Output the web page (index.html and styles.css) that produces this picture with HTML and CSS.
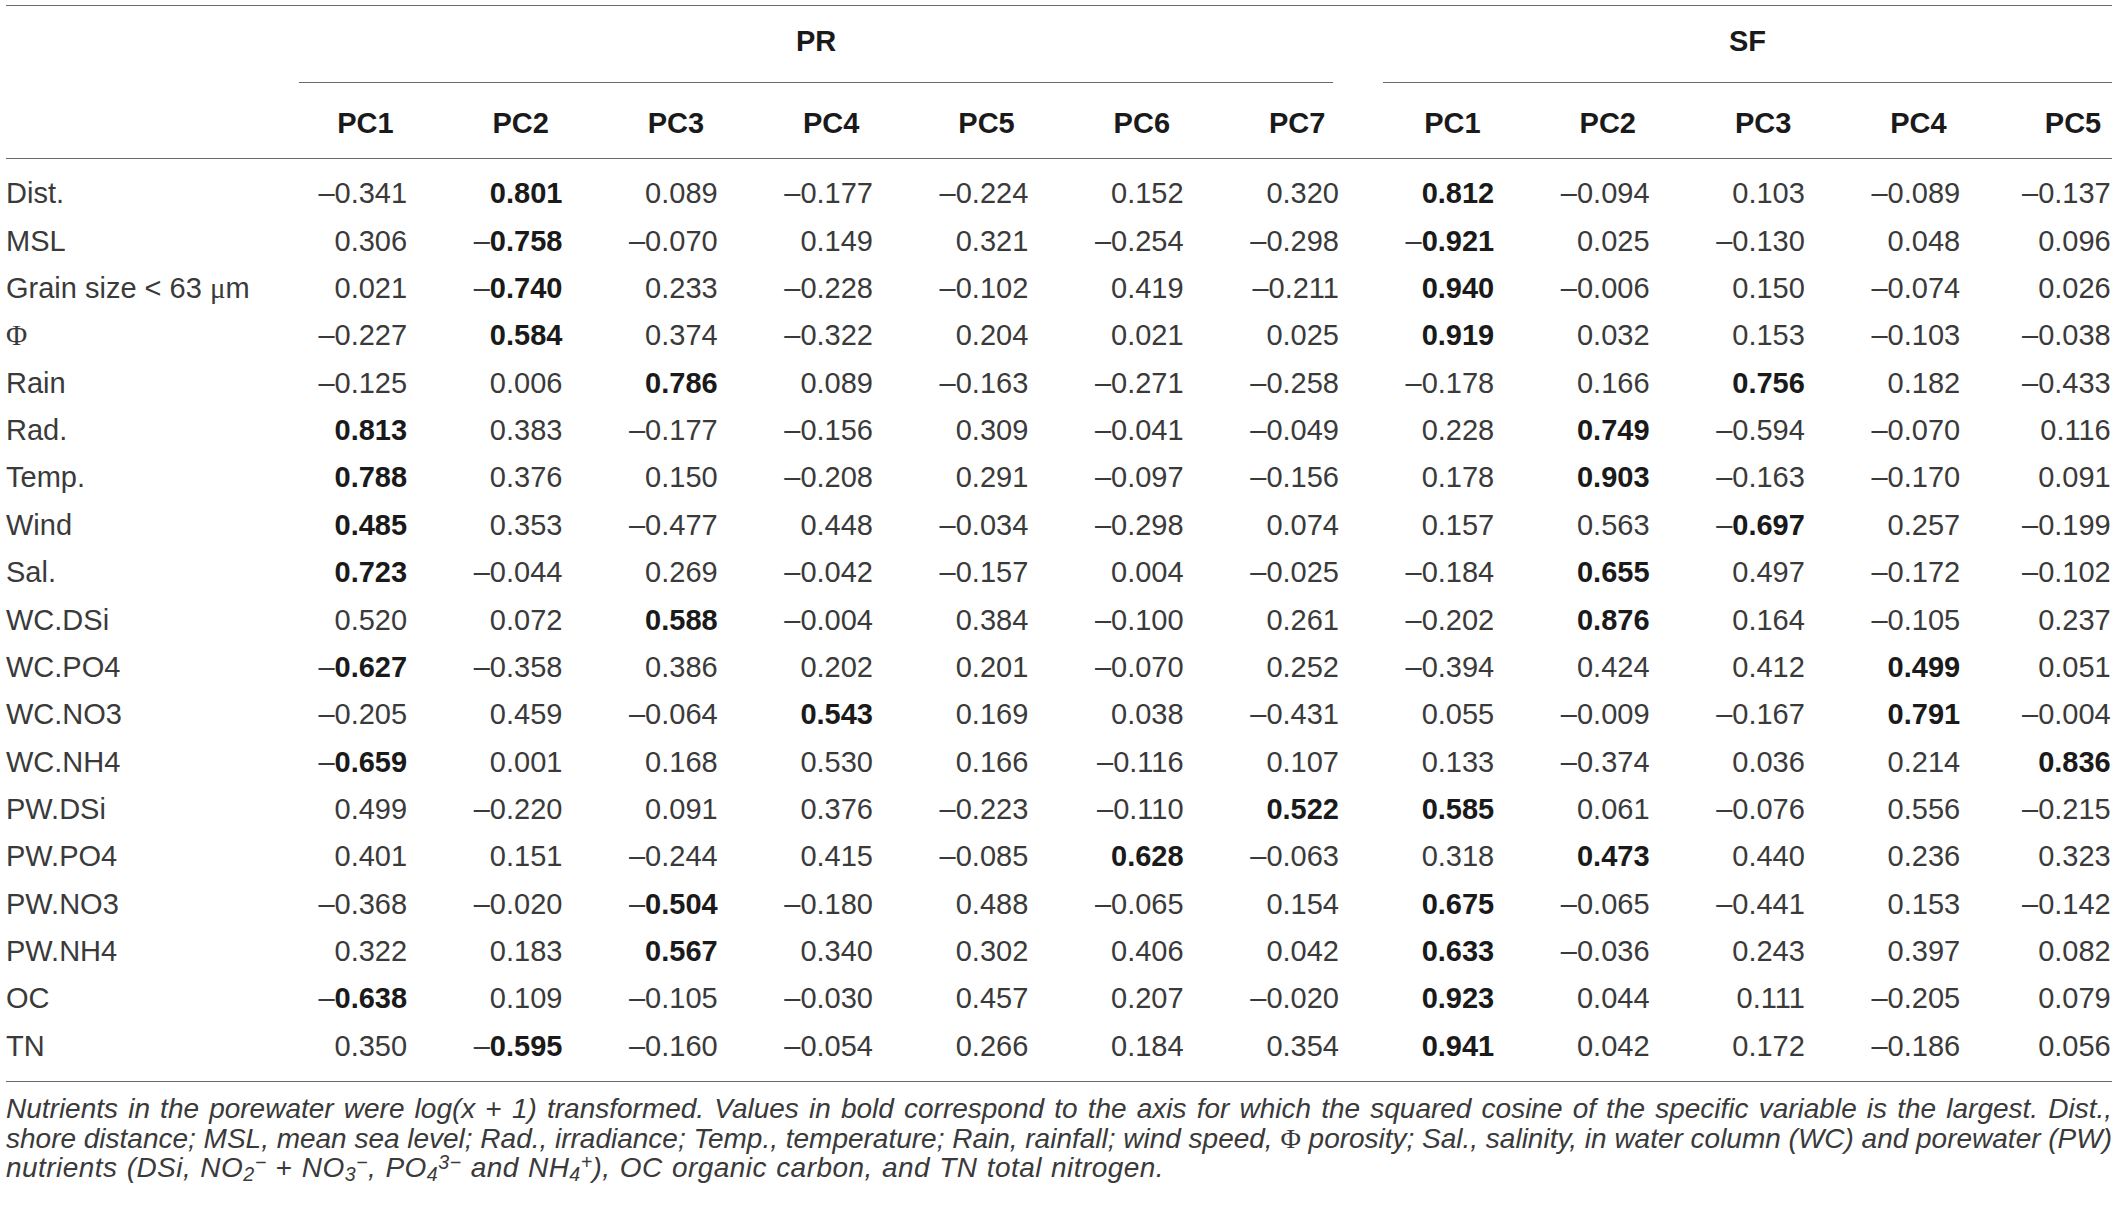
FILE: index.html
```html
<!DOCTYPE html>
<html lang="en">
<head>
<meta charset="utf-8">
<title>PCA loadings</title>
<link rel="stylesheet" href="styles.css">
</head>
<body>
<div class="page">
<table class="pca">
<colgroup>
<col class="c-label">
<col class="c-num"><col class="c-num"><col class="c-num"><col class="c-num"><col class="c-num"><col class="c-num"><col class="c-num">
<col class="c-num"><col class="c-num"><col class="c-num"><col class="c-num"><col class="c-last">
</colgroup>
<thead>
<tr class="grp">
<th></th>
<th colspan="7"><div class="grp-line pr">PR</div></th>
<th colspan="5"><div class="grp-line sf">SF</div></th>
</tr>
<tr class="pcs">
<th></th>
<th class="num">PC1</th><th class="num">PC2</th><th class="num">PC3</th><th class="num">PC4</th><th class="num">PC5</th><th class="num">PC6</th><th class="num">PC7</th>
<th class="num">PC1</th><th class="num">PC2</th><th class="num">PC3</th><th class="num">PC4</th><th class="num last">PC5</th>
</tr>
</thead>
<tbody>
<tr><td class="lab">Dist.</td><td class="num">–0.341</td><td class="num"><b>0.801</b></td><td class="num">0.089</td><td class="num">–0.177</td><td class="num">–0.224</td><td class="num">0.152</td><td class="num">0.320</td><td class="num"><b>0.812</b></td><td class="num">–0.094</td><td class="num">0.103</td><td class="num">–0.089</td><td class="num">–0.137</td></tr>
<tr><td class="lab">MSL</td><td class="num">0.306</td><td class="num">–<b>0.758</b></td><td class="num">–0.070</td><td class="num">0.149</td><td class="num">0.321</td><td class="num">–0.254</td><td class="num">–0.298</td><td class="num">–<b>0.921</b></td><td class="num">0.025</td><td class="num">–0.130</td><td class="num">0.048</td><td class="num">0.096</td></tr>
<tr><td class="lab">Grain size &lt; 63 <span class="greek">μ</span>m</td><td class="num">0.021</td><td class="num">–<b>0.740</b></td><td class="num">0.233</td><td class="num">–0.228</td><td class="num">–0.102</td><td class="num">0.419</td><td class="num">–0.211</td><td class="num"><b>0.940</b></td><td class="num">–0.006</td><td class="num">0.150</td><td class="num">–0.074</td><td class="num">0.026</td></tr>
<tr><td class="lab"><span class="greek">Φ</span></td><td class="num">–0.227</td><td class="num"><b>0.584</b></td><td class="num">0.374</td><td class="num">–0.322</td><td class="num">0.204</td><td class="num">0.021</td><td class="num">0.025</td><td class="num"><b>0.919</b></td><td class="num">0.032</td><td class="num">0.153</td><td class="num">–0.103</td><td class="num">–0.038</td></tr>
<tr><td class="lab">Rain</td><td class="num">–0.125</td><td class="num">0.006</td><td class="num"><b>0.786</b></td><td class="num">0.089</td><td class="num">–0.163</td><td class="num">–0.271</td><td class="num">–0.258</td><td class="num">–0.178</td><td class="num">0.166</td><td class="num"><b>0.756</b></td><td class="num">0.182</td><td class="num">–0.433</td></tr>
<tr><td class="lab">Rad.</td><td class="num"><b>0.813</b></td><td class="num">0.383</td><td class="num">–0.177</td><td class="num">–0.156</td><td class="num">0.309</td><td class="num">–0.041</td><td class="num">–0.049</td><td class="num">0.228</td><td class="num"><b>0.749</b></td><td class="num">–0.594</td><td class="num">–0.070</td><td class="num">0.116</td></tr>
<tr><td class="lab">Temp.</td><td class="num"><b>0.788</b></td><td class="num">0.376</td><td class="num">0.150</td><td class="num">–0.208</td><td class="num">0.291</td><td class="num">–0.097</td><td class="num">–0.156</td><td class="num">0.178</td><td class="num"><b>0.903</b></td><td class="num">–0.163</td><td class="num">–0.170</td><td class="num">0.091</td></tr>
<tr><td class="lab">Wind</td><td class="num"><b>0.485</b></td><td class="num">0.353</td><td class="num">–0.477</td><td class="num">0.448</td><td class="num">–0.034</td><td class="num">–0.298</td><td class="num">0.074</td><td class="num">0.157</td><td class="num">0.563</td><td class="num">–<b>0.697</b></td><td class="num">0.257</td><td class="num">–0.199</td></tr>
<tr><td class="lab">Sal.</td><td class="num"><b>0.723</b></td><td class="num">–0.044</td><td class="num">0.269</td><td class="num">–0.042</td><td class="num">–0.157</td><td class="num">0.004</td><td class="num">–0.025</td><td class="num">–0.184</td><td class="num"><b>0.655</b></td><td class="num">0.497</td><td class="num">–0.172</td><td class="num">–0.102</td></tr>
<tr><td class="lab">WC.DSi</td><td class="num">0.520</td><td class="num">0.072</td><td class="num"><b>0.588</b></td><td class="num">–0.004</td><td class="num">0.384</td><td class="num">–0.100</td><td class="num">0.261</td><td class="num">–0.202</td><td class="num"><b>0.876</b></td><td class="num">0.164</td><td class="num">–0.105</td><td class="num">0.237</td></tr>
<tr><td class="lab">WC.PO4</td><td class="num">–<b>0.627</b></td><td class="num">–0.358</td><td class="num">0.386</td><td class="num">0.202</td><td class="num">0.201</td><td class="num">–0.070</td><td class="num">0.252</td><td class="num">–0.394</td><td class="num">0.424</td><td class="num">0.412</td><td class="num"><b>0.499</b></td><td class="num">0.051</td></tr>
<tr><td class="lab">WC.NO3</td><td class="num">–0.205</td><td class="num">0.459</td><td class="num">–0.064</td><td class="num"><b>0.543</b></td><td class="num">0.169</td><td class="num">0.038</td><td class="num">–0.431</td><td class="num">0.055</td><td class="num">–0.009</td><td class="num">–0.167</td><td class="num"><b>0.791</b></td><td class="num">–0.004</td></tr>
<tr><td class="lab">WC.NH4</td><td class="num">–<b>0.659</b></td><td class="num">0.001</td><td class="num">0.168</td><td class="num">0.530</td><td class="num">0.166</td><td class="num">–0.116</td><td class="num">0.107</td><td class="num">0.133</td><td class="num">–0.374</td><td class="num">0.036</td><td class="num">0.214</td><td class="num"><b>0.836</b></td></tr>
<tr><td class="lab">PW.DSi</td><td class="num">0.499</td><td class="num">–0.220</td><td class="num">0.091</td><td class="num">0.376</td><td class="num">–0.223</td><td class="num">–0.110</td><td class="num"><b>0.522</b></td><td class="num"><b>0.585</b></td><td class="num">0.061</td><td class="num">–0.076</td><td class="num">0.556</td><td class="num">–0.215</td></tr>
<tr><td class="lab">PW.PO4</td><td class="num">0.401</td><td class="num">0.151</td><td class="num">–0.244</td><td class="num">0.415</td><td class="num">–0.085</td><td class="num"><b>0.628</b></td><td class="num">–0.063</td><td class="num">0.318</td><td class="num"><b>0.473</b></td><td class="num">0.440</td><td class="num">0.236</td><td class="num">0.323</td></tr>
<tr><td class="lab">PW.NO3</td><td class="num">–0.368</td><td class="num">–0.020</td><td class="num">–<b>0.504</b></td><td class="num">–0.180</td><td class="num">0.488</td><td class="num">–0.065</td><td class="num">0.154</td><td class="num"><b>0.675</b></td><td class="num">–0.065</td><td class="num">–0.441</td><td class="num">0.153</td><td class="num">–0.142</td></tr>
<tr><td class="lab">PW.NH4</td><td class="num">0.322</td><td class="num">0.183</td><td class="num"><b>0.567</b></td><td class="num">0.340</td><td class="num">0.302</td><td class="num">0.406</td><td class="num">0.042</td><td class="num"><b>0.633</b></td><td class="num">–0.036</td><td class="num">0.243</td><td class="num">0.397</td><td class="num">0.082</td></tr>
<tr><td class="lab">OC</td><td class="num">–<b>0.638</b></td><td class="num">0.109</td><td class="num">–0.105</td><td class="num">–0.030</td><td class="num">0.457</td><td class="num">0.207</td><td class="num">–0.020</td><td class="num"><b>0.923</b></td><td class="num">0.044</td><td class="num">0.111</td><td class="num">–0.205</td><td class="num">0.079</td></tr>
<tr><td class="lab">TN</td><td class="num">0.350</td><td class="num">–<b>0.595</b></td><td class="num">–0.160</td><td class="num">–0.054</td><td class="num">0.266</td><td class="num">0.184</td><td class="num">0.354</td><td class="num"><b>0.941</b></td><td class="num">0.042</td><td class="num">0.172</td><td class="num">–0.186</td><td class="num">0.056</td></tr>
</tbody>
</table>
<div class="note">
<div class="note-line full">Nutrients in the porewater were log(x <span class="up">+</span> 1) transformed. Values in bold correspond to the axis for which the squared cosine of the specific variable is the largest. Dist.,</div>
<div class="note-line full tight">shore distance; MSL, mean sea level; Rad., irradiance; Temp., temperature; Rain, rainfall; wind speed, <span class="greek">Φ</span> porosity; Sal., salinity, in water column (WC) and porewater (PW)</div>
<div class="note-line end">nutrients (DSi, NO<sub>2</sub><sup>−</sup> <span class="up">+</span> NO<sub>3</sub><sup>−</sup>, PO<sub>4</sub><sup>3−</sup> and NH<sub>4</sub><sup>+</sup>), OC organic carbon, and TN total nitrogen.</div>
</div>
</div>
</body>
</html>
```

FILE: styles.css
```css
html, body {
  margin: 0;
  padding: 0;
  background: #ffffff;
}

body {
  font-family: "Liberation Sans", Arial, Helvetica, sans-serif;
  color: #3a3a3a;
}

.page {
  width: 2106px;
  padding: 5px 6px 0 6px;
}

.pca {
  width: 2106px;
  border-collapse: collapse;
  table-layout: fixed;
  font-size: 29px;
}

.c-label {
  width: 247.1px;
}

.c-num {
  width: 155.3px;
}

.c-last {
  width: 150.6px;
}

.pca th,
.pca td {
  padding: 0;
  white-space: nowrap;
}

.pca th {
  font-weight: 700;
  color: #1a1a1a;
}

.grp th {
  border-top: 1px solid #6a6a6a;
  vertical-align: top;
}

.grp-line {
  line-height: 32px;
  padding: 19px 0 25px 0;
  border-bottom: 1px solid #6a6a6a;
  text-align: center;
}

.grp-line.pr {
  margin-left: 45.9px;
  margin-right: 7.2px;
}

.grp-line.sf {
  margin-left: 42.8px;
  margin-right: 0;
}

.pcs th {
  line-height: 32px;
  padding-top: 24.25px;
  padding-bottom: 18.75px;
  border-bottom: 1px solid #6a6a6a;
}

.pcs th.num {
  text-align: center;
  padding-left: 75.2px;
  padding-right: 6px;
}

.pcs th.num.last {
  padding-left: 73.9px;
  padding-right: 1.3px;
}

.pca td {
  line-height: 47.36px;
}

.pca td.num {
  text-align: right;
  padding-right: 1.3px;
}

.pca td.lab {
  text-align: left;
}

.pca tbody tr:first-child td {
  padding-top: 11.3px;
}

.pca tbody tr:last-child td {
  padding-bottom: 10.9px;
  border-bottom: 1px solid #6a6a6a;
}

.pca b {
  font-weight: 700;
  color: #1a1a1a;
}

.greek {
  font-family: "Liberation Serif", "Times New Roman", serif;
  font-style: normal;
}

.note {
  margin-top: 12px;
  font-style: italic;
  font-size: 28px;
  line-height: 29.5px;
  color: #3a3a3a;
}

.note-line {
  white-space: nowrap;
}

.note-line.full {
  text-align: justify;
  text-align-last: justify;
}

.note-line.tight {
  word-spacing: -0.5px;
}

.note-line.end {
  letter-spacing: 0.45px;
  word-spacing: 1px;
}

.up {
  font-style: normal;
}

.note sub,
.note sup {
  font-size: 0.7em;
  line-height: 0;
}

.note sub {
  vertical-align: -0.2em;
}

.note sup {
  vertical-align: 0.42em;
}
```
